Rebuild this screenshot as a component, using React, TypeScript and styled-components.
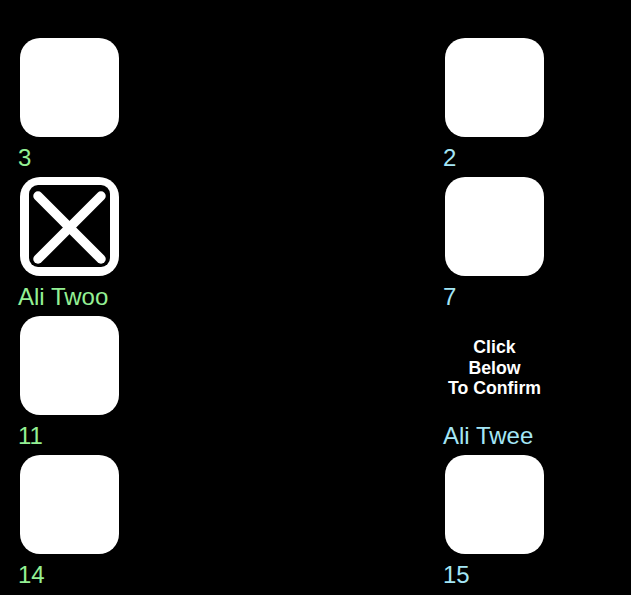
import * as React from 'react'
import styled, { createGlobalStyle } from 'styled-components'

type Side = 'left' | 'right'

type Cell = {
  label: string
  kind: 'blank' | 'crossed' | 'confirm'
}

const GlobalStyle = createGlobalStyle`
  html, body {
    margin: 0;
    padding: 0;
    background: #000;
  }

  body {
    font-family: 'Liberation Sans', Arial, sans-serif;
  }
`

const Board = styled.main`
  display: grid;
  grid-template-columns: 425px 120px;
  padding: 38px 0 0 18px;
  min-height: 595px;
  box-sizing: border-box;
  background: #000;
`

const Column = styled.div`
  display: flex;
  flex-direction: column;
  gap: 6px;
`

const Slot = styled.div`
  display: flex;
  flex-direction: column;
`

const Tile = styled.div`
  width: 99px;
  height: 99px;
  margin: 0 0 8px 2px;
  border-radius: 20px;
  background: #fff;
`

const CrossedTile = styled.svg`
  display: block;
  width: 99px;
  height: 99px;
  margin: 0 0 8px 2px;
`

const Confirm = styled.div`
  width: 99px;
  height: 99px;
  margin: 0 0 8px 2px;
  padding-top: 5px;
  box-sizing: border-box;
  display: flex;
  align-items: center;
  justify-content: center;
  text-align: center;
  color: #fff;
  font-size: 17.7px;
  font-weight: 700;
  line-height: 20.5px;
  white-space: nowrap;
`

const Label = styled.span<{ $side: Side }>`
  font-size: 24px;
  line-height: 26px;
  color: ${({ $side }) => ($side === 'left' ? '#94f094' : '#a4e6f6')};
`

const leftCells: Cell[] = [
  { label: '3', kind: 'blank' },
  { label: 'Ali Twoo', kind: 'crossed' },
  { label: '11', kind: 'blank' },
  { label: '14', kind: 'blank' },
]

const rightCells: Cell[] = [
  { label: '2', kind: 'blank' },
  { label: '7', kind: 'blank' },
  { label: 'Ali Twee', kind: 'confirm' },
  { label: '15', kind: 'blank' },
]

const Cross = () => (
  <CrossedTile viewBox="0 0 99 99">
    <rect x="0" y="0" width="99" height="99" rx="20" fill="#fff" />
    <rect x="9" y="8" width="81" height="82" rx="9" fill="#000" />
    <g stroke="#fff" strokeWidth="9.5" strokeLinecap="round">
      <line x1="18" y1="19" x2="81" y2="82" />
      <line x1="81" y1="19" x2="18" y2="82" />
    </g>
  </CrossedTile>
)

const renderSlot = (cell: Cell, side: Side) => (
  <Slot key={cell.label}>
    {cell.kind === 'blank' && <Tile />}
    {cell.kind === 'crossed' && <Cross />}
    {cell.kind === 'confirm' && (
      <Confirm>
        Click
        <br />
        Below
        <br />
        To Confirm
      </Confirm>
    )}
    <Label $side={side}>{cell.label}</Label>
  </Slot>
)

const App: React.FC = () => {
  return (
    <>
      <GlobalStyle />
      <Board>
        <Column>{leftCells.map((c) => renderSlot(c, 'left'))}</Column>
        <Column>{rightCells.map((c) => renderSlot(c, 'right'))}</Column>
      </Board>
    </>
  )
}

export default App
